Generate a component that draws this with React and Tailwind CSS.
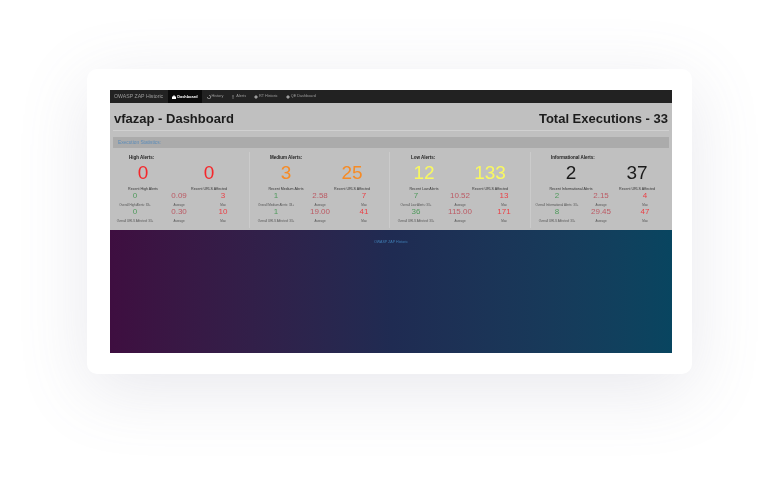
const panels = [
  { title: "High Alerts:", big: ["0", "0"], color: "text-[#f5272b]", recent: "Recent High Alerts", o1: "Overall High Alerts: 33+", o2: "Overall URLS Affected: 33+", row1: ["0", "0.09", "3"], row2: ["0", "0.30", "10"], pad: "pl-[3px]", bigPad: "pl-0", titlePad: "pl-[19px]", border: "border-r w-[140px]" },
  { title: "Medium Alerts:", big: ["3", "25"], color: "text-[#f68b26]", recent: "Recent Medium Alerts", o1: "Overall Medium Alerts: 33+", o2: "Overall URLS Affected: 33+", row1: ["1", "2.58", "7"], row2: ["1", "19.00", "41"], pad: "pl-[4px]", bigPad: "pl-[3px]", titlePad: "pl-[20px]", border: "border-r w-[140px]" },
  { title: "Low Alerts:", big: ["12", "133"], color: "text-[#f8f860]", recent: "Recent Low Alerts", o1: "Overall Low Alerts: 33+", o2: "Overall URLS Affected: 33+", row1: ["7", "10.52", "13"], row2: ["36", "115.00", "171"], pad: "pl-[4px]", bigPad: "pl-[1px]", titlePad: "pl-[21px]", border: "border-r w-[141px]" },
  { title: "Informational Alerts:", big: ["2", "37"], color: "text-[#1a1a1a]", recent: "Recent Informational Alerts", o1: "Overall Informational Alerts: 33+", o2: "Overall URLS Affected: 33+", row1: ["2", "2.15", "4"], row2: ["8", "29.45", "47"], pad: "pl-[4px]", bigPad: "pl-[7px]", titlePad: "pl-[20px]", border: "w-[141px]" },
];

const NavIcon = ({ d }) => (
  <svg viewBox="0 0 10 10" className="w-[4px] h-[4px] fill-current"><path d={d} /></svg>
);

function Stat({ value, label, color }) {
  return (
    <div className="w-[44px] flex flex-col items-center">
      <div className={`text-[8px] leading-[10px] ${color}`}>{value}</div>
      <div className="text-[3px] leading-[5px] mt-[2px] whitespace-nowrap text-[#555]">{label}</div>
    </div>
  );
}

function StatRow({ values, label, mt }) {
  return (
    <div className={`flex ${mt}`}>
      <Stat value={values[0]} label={label} color="text-[#4f9a5c]" />
      <Stat value={values[1]} label="Average" color="text-[#bb5a64]" />
      <Stat value={values[2]} label="Max" color="text-[#ea4046]" />
    </div>
  );
}

function Panel({ p }) {
  return (
    <div className={`${p.border} border-[#cbcbcb] h-[76px] shrink-0`}>
      <div className={`${p.titlePad} text-[4.5px] leading-[5px] font-bold text-[#222] mt-[3px]`}>{p.title}</div>
      <div className={`flex ${p.bigPad} mt-[1px]`}>
        {p.big.map((b, i) => (
          <div key={i} className={`w-[66px] text-center text-[19px] leading-[24px] ${p.color}`}>{b}</div>
        ))}
      </div>
      <div className={`flex ${p.bigPad} mt-[2px]`}>
        <div className="w-[66px] text-center text-[3.6px] leading-[5px] text-[#333] whitespace-nowrap">{p.recent}</div>
        <div className="w-[66px] text-center text-[3.6px] leading-[5px] text-[#333] whitespace-nowrap">Recent URLS Affected</div>
      </div>
      <div className={p.pad}>
        <StatRow values={p.row1} label={p.o1} mt="-mt-[1px]" />
        <StatRow values={p.row2} label={p.o2} mt="-mt-[1.5px]" />
      </div>
    </div>
  );
}

export default function App() {
  return (
    <div className="w-[780px] h-[480px] bg-white overflow-hidden pt-[69px] pl-[87px] font-['Liberation_Sans',Arial,sans-serif]">
      <div className="w-[605px] h-[305px] bg-white rounded-[10px] shadow-[0_16px_70px_rgba(110,115,145,0.16)] pt-[21px] pl-[23px]">
        <div className="w-[562px] h-[263px] flex flex-col blur-[0.3px]">
          <div className="h-[13px] bg-[#222222] flex items-center shrink-0">
            <span className="text-[#9d9d9d] text-[5.2px] pl-[4px] pr-[5px] whitespace-nowrap">OWASP ZAP Historic</span>
            <div className="h-full bg-[#0a0a0a] text-white font-bold flex items-center gap-[1px] px-[4px] text-[3.9px]">
              <NavIcon d="M0 4h10v6H0zM3 1h4v3H3z" />Dashboard
            </div>
            <div className="flex items-center gap-[1px] pl-[5px] text-[3.8px] text-[#9d9d9d]"><NavIcon d="M5 0a5 5 0 1 1-5 5h2a3 3 0 1 0 3-3z" />History</div>
            <div className="flex items-center gap-[1px] pl-[8px] text-[3.8px] text-[#9d9d9d]"><NavIcon d="M4 0h2v7H4zM4 8h2v2H4z" />Alerts</div>
            <div className="flex items-center gap-[1px] pl-[8px] text-[3.8px] text-[#9d9d9d]"><NavIcon d="M5 0l5 5-5 5-5-5z" />RT Historic</div>
            <div className="flex items-center gap-[1px] pl-[8px] text-[3.8px] text-[#9d9d9d]"><NavIcon d="M5 0l5 5-5 5-5-5z" />QE Dashboard</div>
          </div>
          <div className="h-[127px] bg-[#c0c0c0] shrink-0 px-[3px]">
            <div className="flex justify-between items-center h-[28px] pt-[4px] pl-[1px] pr-[1px] border-b border-[#d0d0d0] text-[13px] font-bold text-[#1c1c1c]">
              <span>vfazap - Dashboard</span>
              <span>Total Executions - 33</span>
            </div>
            <div className="h-[11px] mt-[6px] w-[556px] bg-[#ababab] flex items-center pl-[5px] text-[4.8px] text-[#5b8bb8]">Execution Statistics:</div>
            <div className="flex mt-[4px] -ml-[3px]">
              {panels.map((p) => <Panel key={p.title} p={p} />)}
            </div>
          </div>
          <div className="flex-1 bg-gradient-to-r from-[#3e0e40] via-[#1f2b52] to-[#084560] pt-[9px] text-center text-[3.6px] leading-[5px] text-[#3f7fb5]">
            <div className="mt-[0.5px]">OWASP ZAP Historic</div>
          </div>
        </div>
      </div>
    </div>
  );
}
